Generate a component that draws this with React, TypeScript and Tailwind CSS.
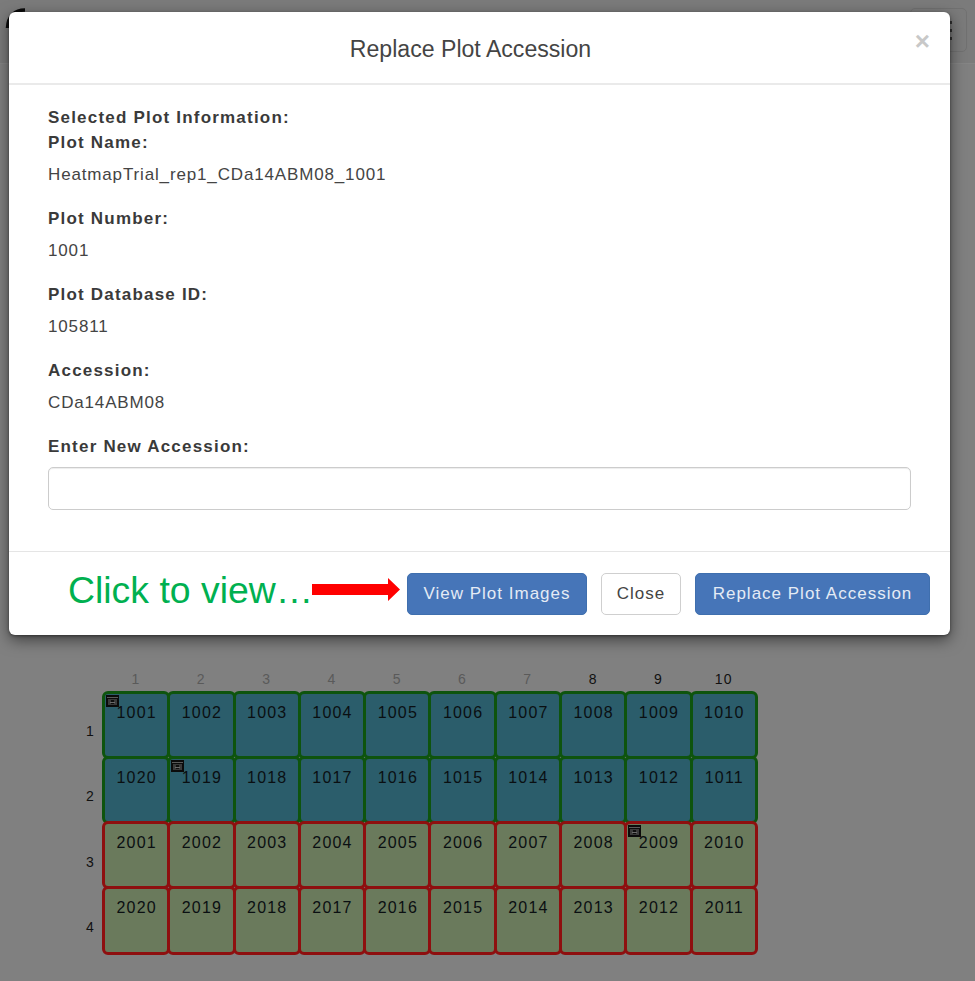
const PLOTS = [
  [1001, 1002, 1003, 1004, 1005, 1006, 1007, 1008, 1009, 1010],
  [1020, 1019, 1018, 1017, 1016, 1015, 1014, 1013, 1012, 1011],
  [2001, 2002, 2003, 2004, 2005, 2006, 2007, 2008, 2009, 2010],
  [2020, 2019, 2018, 2017, 2016, 2015, 2014, 2013, 2012, 2011],
];
const WITH_IMAGE = [1001, 1019, 2009];
const COLS = [1, 2, 3, 4, 5, 6, 7, 8, 9, 10];

const CameraBadge = () => (
  <svg viewBox="0 0 13 12" className="absolute left-[1px] top-[1px] h-[12px] w-[13px]">
    <rect width="13" height="12" fill="#0b0b0b" />
    <rect x="1" y="2" width="11" height="1" fill="#5a5a5a" />
    <rect x="2" y="4" width="9" height="6" fill="#3a3a3a" />
    <rect x="5" y="5" width="3" height="4" fill="#0f0f0f" />
    <rect x="4" y="7" width="5" height="1" fill="#6a6a6a" />
  </svg>
);

const Plot = ({ id, green }: { id: number; green: boolean }) => (
  <div
    className={`relative -m-[1.5px] flex justify-center rounded-[6px] border-[3px] pl-[1px] pt-[8px] text-[16px] leading-[22px] tracking-[1.2px] text-[#0a0f12] ${
      green ? "border-[#0e540e] bg-[#2b5d6b]" : "border-[#8e0f0f] bg-[#6a7a5c]"
    }`}
  >
    {WITH_IMAGE.includes(id) && <CameraBadge />}
    {id}
  </div>
);

const Heatmap = () => (
  <div className="ml-[78px] grid w-[680px] grid-cols-[25.5px_repeat(10,65.3px)] grid-rows-[25px_repeat(4,65.3px)] text-[14px] tracking-[1.4px]">
    <div />
    {COLS.map((c) => (
      <div key={c} className={`text-center leading-[24px] ${c > 7 ? "text-[#111]" : "text-[#5a5a5a]"}`}>
        {c}
      </div>
    ))}
    {PLOTS.map((row, r) => (
      <div key={r} className="contents">
        <div className="pl-[8px] pt-[29px] leading-[20px] text-[#111]">{r + 1}</div>
        {row.map((id) => (
          <Plot key={id} id={id} green={r < 2} />
        ))}
      </div>
    ))}
  </div>
);

const Field = ({ label, value }: { label: string; value: string }) => (
  <div className="mb-[24px]">
    <div className="font-bold leading-[20px] tracking-[1.2px] text-[#3a3a3a]">{label}</div>
    <div className="mt-[12px] leading-[20px] text-[#444]">{value}</div>
  </div>
);

const Btn = ({ children, primary, width }: { children: string; primary?: boolean; width: string }) => (
  <button
    className={`h-[42px] shrink-0 whitespace-nowrap rounded-[5px] border text-center text-[17px] tracking-[1px] ${width} ${
      primary ? "border-[#3f6fae] bg-[#4675b8] text-[#e4ebf5]" : "border-[#cfcfcf] bg-white text-[#444]"
    }`}
  >
    {children}
  </button>
);

export default function App() {
  return (
    <div className="relative h-[981px] w-[975px] overflow-hidden bg-[#808080] font-['Liberation_Sans',sans-serif]">
      {/* page behind the overlay */}
      <div className="flex h-[64px] items-start justify-between border-b border-[#858585] bg-[#7b7b7b] pl-[5px] pt-[8px]">
        <svg viewBox="0 0 22 24" className="h-[24px] w-[22px]">
          <path d="M20 2 C10 2 3 8 2.5 20" fill="none" stroke="#0a0a0a" strokeWidth="3.5" />
        </svg>
        <div className="mr-[8px] flex h-[44px] w-[57px] flex-col items-end justify-center gap-[5px] rounded-[5px] border border-[#717171] pr-[14px]">
          <div className="h-[3px] w-[22px] bg-[#333]" />
          <div className="h-[3px] w-[22px] bg-[#333]" />
          <div className="h-[3px] w-[22px] bg-[#333]" />
        </div>
      </div>
      <div className="pt-[603px]">
        <Heatmap />
      </div>

      {/* modal */}
      <div className="absolute left-[9px] top-[12px] flex h-[623px] w-[941px] flex-col rounded-[6px] bg-white text-[17px] tracking-[0.85px] text-[#333] shadow-[0_5px_15px_rgba(0,0,0,0.5),0_1px_3px_rgba(0,0,0,0.4)]">
        <div className="relative h-[73px] border-b-2 border-[#eaeaea] pr-[18px] text-center">
          <h4 className="pt-[23px] text-[23.1px] leading-[28px] tracking-normal text-[#444]">Replace Plot Accession</h4>
          <span className="absolute right-[20px] top-[15px] text-[26px] font-bold leading-[28px] tracking-normal text-[#c8c8c8]">×</span>
        </div>
        <div className="flex-1 px-[39px] pt-[23px]">
          <div className="font-bold leading-[20px] tracking-[1.2px] text-[#3a3a3a]">Selected Plot Information:</div>
          <div className="mt-[5px]">
            <Field label="Plot Name:" value="HeatmapTrial_rep1_CDa14ABM08_1001" />
            <Field label="Plot Number:" value="1001" />
            <Field label="Plot Database ID:" value="105811" />
            <Field label="Accession:" value="CDa14ABM08" />
          </div>
          <div className="mt-[1px] font-bold leading-[20px] tracking-[1.2px] text-[#3a3a3a]">Enter New Accession:</div>
          <div className="mt-[10px] h-[43px] w-[863px] rounded-[5px] border border-[#cccccc] bg-white shadow-[inset_0_1px_1px_rgba(0,0,0,0.075)]" />
        </div>
        <div className="flex h-[84px] items-center border-t border-[#e5e5e5] pl-[59px]">
          <span className="-mt-[6px] w-[244px] shrink-0 whitespace-nowrap text-[37.4px] leading-none tracking-normal text-[#00b050]">Click to view…</span>
          <svg viewBox="0 0 88 23" className="-mt-[9px] mr-[7px] h-[23px] w-[88px] shrink-0">
            <path d="M0 6 H76 V0 L88 11.5 L76 23 V17 H0 Z" fill="#f00" />
          </svg>
          <div className="flex gap-[14px]">
            <Btn primary width="w-[180px]">View Plot Images</Btn>
            <Btn width="w-[80px]">Close</Btn>
            <Btn primary width="w-[235px]">Replace Plot Accession</Btn>
          </div>
        </div>
      </div>
    </div>
  );
}
